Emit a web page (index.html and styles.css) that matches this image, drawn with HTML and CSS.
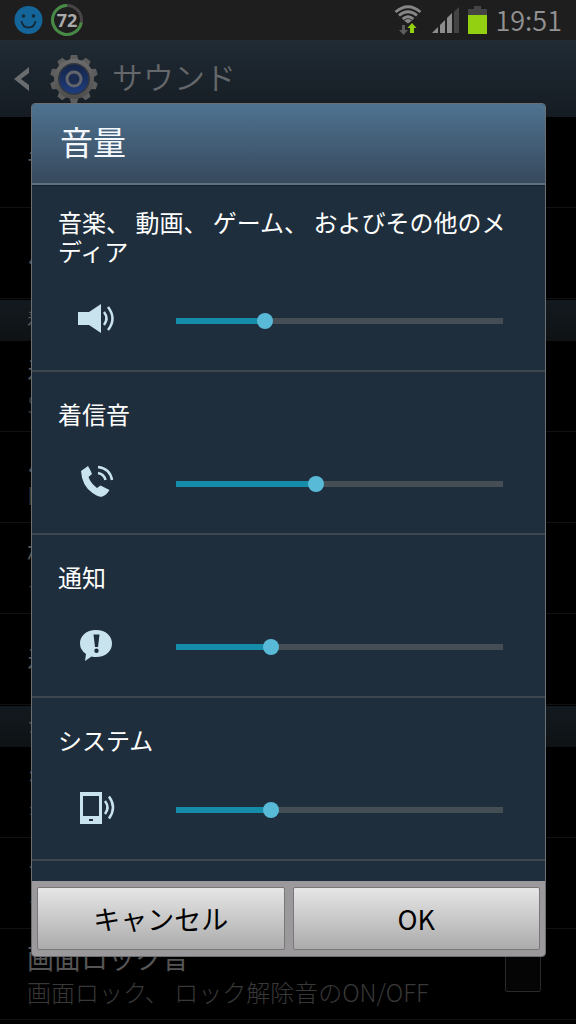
FILE: index.html
```html
<!DOCTYPE html>
<html lang="ja">
<head>
<meta charset="utf-8">
<meta name="viewport" content="width=device-width, initial-scale=1">
<title>サウンド</title>
<link rel="stylesheet" href="styles.css">
</head>
<body>
<div class="screen">
  <div class="status-bar">
    <div class="status-left">
      <svg class="status-face" viewBox="0 0 28 28" aria-hidden="true">
        <circle cx="14" cy="14" r="14" fill="#14669a"/>
        <circle cx="9" cy="10" r="1.800" fill="#14293a"/><circle cx="19" cy="10" r="1.800" fill="#14293a"/>
        <path d="M7 15q1 6.500 7 6.500t7-6.500" fill="none" stroke="#14293a" stroke-width="1.800"/>
      </svg>
      <div class="gauge">
        <svg viewBox="0 0 32 32" aria-hidden="true">
          <circle cx="16" cy="16" r="14.500" fill="none" stroke="#484446" stroke-width="3"/>
          <path d="M16 1.500A14.500 14.500 0 1 0 30.300 18.500" fill="none" stroke="#458b45" stroke-width="3"/>
        </svg>
        <span class="gauge-value">72</span>
      </div>
    </div>
    <div class="status-right">
      <svg class="status-wifi" viewBox="0 0 28 30" aria-hidden="true">
        <g fill="none" stroke="#878787" stroke-width="2.800">
          <path d="M1.500 7Q14-3.500 26.500 7"/><path d="M5 10.500Q14 3 23 10.500"/><path d="M8.500 14Q14 9.500 19.500 14"/>
        </g>
        <path d="M10 15.500q4-3 8 0L14 18.500z" fill="#878787"/>
        <path d="M8 20h3v5h3l-4.500 5L5 25h3z" fill="#5c5c5c"/>
        <path d="M16 28h4v-5h2.500l-4.500-5-4.500 5H16z" fill="#92d011"/>
      </svg>
      <svg class="status-signal" viewBox="0 0 28 28" aria-hidden="true">
        <path d="M0 27L6 21v6z" fill="#8c8c8c"/><path d="M8 19l5-5v13H8z" fill="#8c8c8c"/><path d="M15 12l5-5v20h-5z" fill="#8c8c8c"/><path d="M22 6l5-5v26h-5z" fill="#444"/>
      </svg>
      <svg class="status-battery" viewBox="0 0 19 28" aria-hidden="true">
        <path d="M6 0h7v3h6v7H0V3h6z" fill="#444"/><path d="M0 9h19v19H0z" fill="#92d011"/>
      </svg>
      <span class="clock">19:51</span>
    </div>
  </div>

  <header class="action-bar">
    <svg class="back" viewBox="0 0 16 24" aria-hidden="true"><path d="M15 0v6L7 12l8 6v6L0 12z" fill="#6a6d70"/></svg>
    <svg class="gear" viewBox="0 0 50 50" aria-hidden="true">
      <defs>
        <linearGradient id="rim" x2="0" y2="1"><stop stop-color="#6c6c6c"/><stop offset="1" stop-color="#4d4d4d"/></linearGradient>
        <linearGradient id="hub" x2="0" y2="1"><stop stop-color="#152448"/><stop offset="1" stop-color="#1e3c7c"/></linearGradient>
      </defs>
      <g fill="#5d5d5d">
        <path id="teeth" d="M20 8l2-7h6l2 7zM20 42l2 7h6l2-7z"/>
        <use href="#teeth" transform="rotate(36 25 25)"/><use href="#teeth" transform="rotate(72 25 25)"/>
        <use href="#teeth" transform="rotate(108 25 25)"/><use href="#teeth" transform="rotate(144 25 25)"/>
      </g>
      <circle cx="25" cy="25" r="20" fill="url(#rim)"/>
      <circle cx="25" cy="25" r="16" fill="#33373e"/>
      <circle cx="25" cy="25" r="14.500" fill="url(#hub)"/>
      <circle cx="25" cy="25" r="7" fill="#1c2c50" stroke="#62656b" stroke-width="3"/>
    </svg>
    <h1 class="screen-title">サウンド</h1>
  </header>

  <main class="settings">
    <div class="row"><p class="name">音量</p></div>
    <div class="row"><p class="name">バイブの強度</p></div>
    <h2 class="section">着信</h2>
    <div class="row"><p class="name">着信音</p><p class="detail">S_Over the horizon</p></div>
    <div class="row"><p class="name">バイブ</p><p class="detail">Basic call</p></div>
    <div class="row"><p class="name">標準の通知音</p><p class="detail">ーホイッスル</p></div>
    <div class="row"><p class="name">着信時バイブ</p></div>
    <h2 class="section">システム</h2>
    <div class="row"><p class="name">キー操作音</p><p class="detail">キー操作音のON/OFF</p></div>
    <div class="row"><p class="name">タッチ操作音</p><p class="detail">タッチ操作音のON/OFF</p></div>
    <div class="row row-check">
      <label for="lock-sound"><span class="name">画面ロック音</span><span class="detail">画面ロック、 ロック解除音のON/OFF</span></label>
      <input class="check" type="checkbox" id="lock-sound">
    </div>
  </main>

  <div class="dialog" role="dialog" aria-labelledby="dialog-title">
    <h2 class="dialog-title" id="dialog-title">音量</h2>
    <div class="volumes">
      <div class="volume">
        <label for="media">音楽、 動画、 ゲーム、 およびその他のメディア</label>
        <div class="control">
          <svg class="icon" viewBox="0 0 40 40" aria-hidden="true">
            <path d="M2 13h11L25 5v29L13 26H2z" fill="#c9e3ee"/>
            <g fill="none" stroke="#c9e3ee" stroke-width="2.500"><path d="M28 13q5 6.500 0 13"/><path d="M32 8q9 11.500 0 23"/></g>
          </svg>
          <input type="range" id="media" min="0" max="1000" value="260" style="--level:.26">
        </div>
      </div>
      <div class="volume">
        <label for="ring">着信音</label>
        <div class="control">
          <svg class="icon" viewBox="0 0 40 40" aria-hidden="true">
            <path d="M5 9l7-5q2.500 4 4 8l-3.500 3q2 6 8.500 11l3.500-2.500 9 4.500q-3 5-7 6.500-4 1-10-3.500Q6 24 5 9z" fill="#c9e3ee"/>
            <g fill="none" stroke="#c9e3ee" stroke-width="2.500"><path d="M22 11q6 1 7.500 7"/><path d="M22 5q12 1.500 14 13"/></g>
          </svg>
          <input type="range" id="ring" min="0" max="1000" value="424" style="--level:.424">
        </div>
      </div>
      <div class="volume">
        <label for="notice">通知</label>
        <div class="control">
          <svg class="icon" viewBox="0 0 40 40" aria-hidden="true">
            <path d="M20 5c10 0 16 6 16 13.500S30 32 20 32q-2.500 0-4.500-.5L9 36l1-7Q4 25 4 18.500C4 11 10 5 20 5z" fill="#c9e3ee"/>
            <path d="M17.500 9.500h6L22 22h-3zM20.500 23.500a2.200 2.200 0 1 1 0 4.400 2.200 2.200 0 0 1 0-4.400z" fill="#1e2e3c"/>
          </svg>
          <input type="range" id="notice" min="0" max="1000" value="280" style="--level:.28">
        </div>
      </div>
      <div class="volume">
        <label for="system">システム</label>
        <div class="control">
          <svg class="icon" viewBox="0 0 40 40" aria-hidden="true">
            <path fill-rule="evenodd" d="M4 4h22v32H4zM7 8v20h16V8zM13 31v2h4v-2z" fill="#c9e3ee"/>
            <g fill="none" stroke="#c9e3ee" stroke-width="2.500"><path d="M29 13q5 6.500 0 13"/><path d="M33 8.500q8 11 0 22"/></g>
          </svg>
          <input type="range" id="system" min="0" max="1000" value="280" style="--level:.28">
        </div>
      </div>
    </div>
    <div class="actions">
      <button type="button">キャンセル</button>
      <button type="button">OK</button>
    </div>
  </div>
</div>
</body>
</html>
```
FILE: styles.css
```css
* { box-sizing: border-box; }

body {
  margin: 0;
  background: #000;
  font-family: "Noto Sans CJK JP", sans-serif;
}

h1, h2, p { margin: 0; font-weight: 400; }

.screen {
  position: relative;
  height: 100vh;
  overflow: hidden;
}

.status-bar {
  display: flex;
  justify-content: space-between;
  align-items: center;
  height: 40px;
  padding: 0 14px;
  background: #1e1e1e;
}

.status-left, .status-right { display: flex; align-items: center; gap: 8px; }
.status-face { width: 29px; height: 28px; }
.gauge { position: relative; width: 32px; height: 32px; }
.gauge svg { display: block; }
.gauge-value {
  position: absolute;
  inset: 0;
  color: #aaa;
  font: 700 18px/32px "Open Sans", sans-serif;
  text-align: center;
}
.status-wifi { width: 28px; height: 30px; margin-right: 2px; }
.status-signal { width: 28px; height: 28px; }
.status-battery { width: 19px; height: 28px; }
.clock { color: #929292; font-size: 27px; line-height: 40px; font-weight: 350; }

.action-bar {
  display: flex;
  align-items: center;
  height: 77px;
  padding-left: 14px;
  background: linear-gradient(#202b33, #151b23);
}
.back { width: 16px; height: 24px; margin-right: 19px; }
.gear { width: 50px; height: 50px; margin-right: 13px; }
.screen-title {
  padding-bottom: 6px;
  color: #65686b;
  font-size: 31px;
  line-height: 48px;
  font-weight: 350;
}

.row {
  display: flex;
  flex-direction: column;
  justify-content: center;
  height: 91px;
  padding: 0 27px;
  border-bottom: 1px solid #111;
}
.name { display: block; color: #555; font-size: 27px; line-height: 36px; white-space: nowrap; }
.detail { display: block; color: #383838; font-size: 24px; line-height: 32px; font-weight: 300; white-space: nowrap; }
.section {
  height: 41px;
  margin-top: 1px;
  padding: 0 27px;
  background: linear-gradient(#131a1f, #0e1215);
  color: #555;
  font-size: 20px;
  line-height: 38px;
}
.row-check { flex-direction: row; align-items: center; justify-content: space-between; padding-right: 35px; }
.check {
  appearance: none;
  width: 36px;
  height: 36px;
  margin: 0;
  border: 1px solid #292929;
  border-radius: 2px;
  background: #050505;
}

.dialog {
  position: absolute;
  top: 103px;
  right: 30px;
  bottom: 67px;
  left: 31px;
  display: flex;
  flex-direction: column;
  overflow: hidden;
  border: 1px solid #6c6f72;
  border-radius: 4px;
  background: #1e2e3c;
}
.dialog-title {
  flex: none;
  padding: 0 28px 5px;
  border-bottom: 2px solid #5f717c;
  background: linear-gradient(#4e7390, #37495d);
  color: #f4f8fc;
  font-size: 33px;
  line-height: 74px;
}
.volumes { flex: 1; min-height: 0; overflow: hidden; border-top: 1px solid #11202b; }
.volume { padding: 27px 24px 19px 26px; border-bottom: 2px solid #3d4750; }
.volume:first-child { padding-top: 21px; }
.volume label { display: block; color: #fff; font-size: 24px; line-height: 29px; }
.control { display: flex; align-items: center; height: 86px; padding: 26px 18px 0; }
.icon { flex: none; width: 40px; height: 40px; margin: 0 60px 4px 0; }

.control input {
  appearance: none;
  flex: 1;
  min-width: 0;
  height: 16px;
  margin: 0;
  background: none;
}
.control input::-webkit-slider-runnable-track {
  height: 6px;
  background: linear-gradient(to right, #168cab calc(8px + (100% - 16px) * var(--level)), #454e55 0);
}
.control input::-webkit-slider-thumb {
  appearance: none;
  width: 16px;
  height: 16px;
  margin-top: -5px;
  border-radius: 50%;
  background: #58bad7;
}

.actions {
  display: grid;
  grid-template-columns: 1fr 1fr;
  gap: 8px;
  padding: 6px 5px;
  background: #9b999c;
}
.actions button {
  height: 63px;
  border: 1px solid #777;
  border-radius: 2px;
  background: linear-gradient(#e6e6e6, #ababab);
  color: #000;
  font: 400 27px/32px "Noto Sans CJK JP", sans-serif;
}
```
